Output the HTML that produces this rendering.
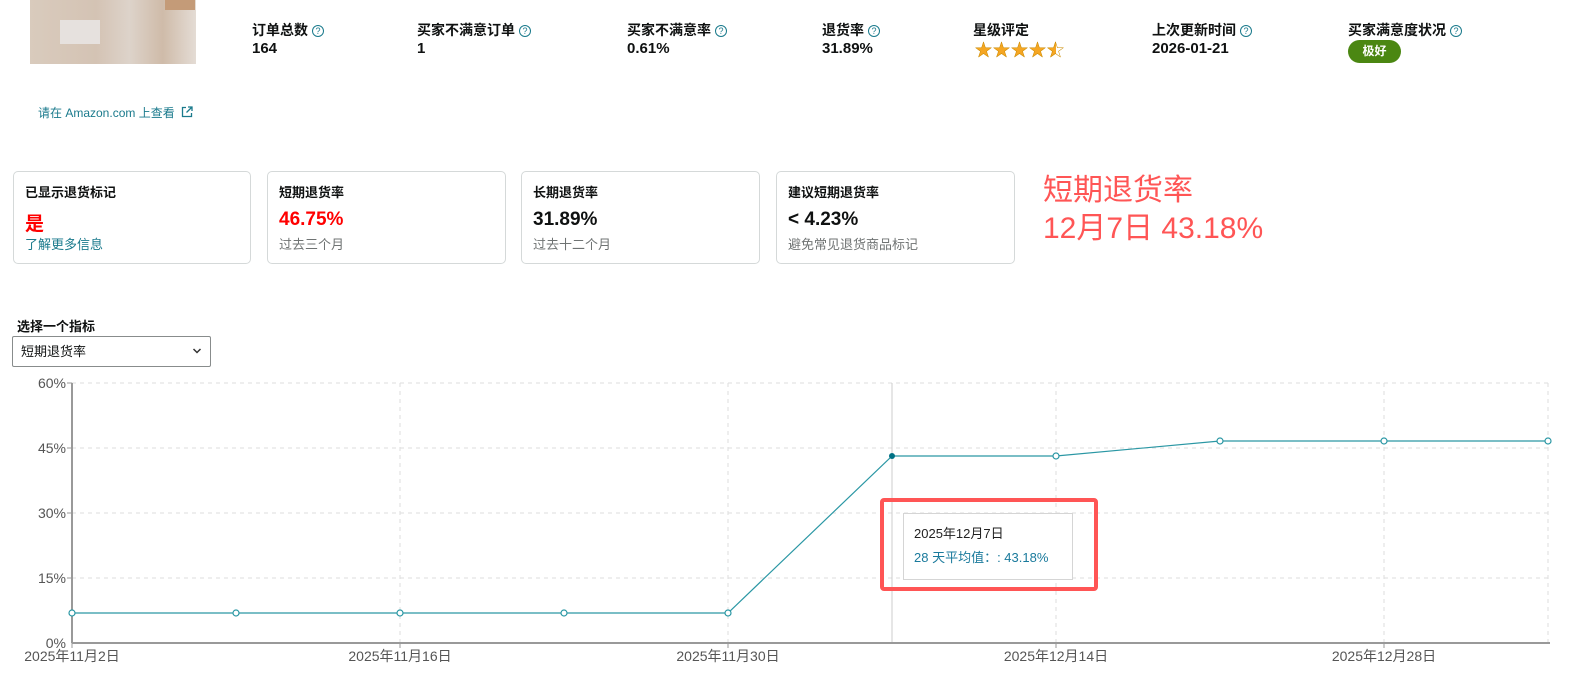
<!DOCTYPE html>
<html><head><meta charset="utf-8"><style>
*{margin:0;padding:0;box-sizing:border-box}
body{width:1578px;height:686px;background:#fff;font-family:"Liberation Sans","Noto Sans CJK SC",sans-serif;color:#0f1111;position:relative;overflow:hidden}
.a{position:absolute}
.lbl{font-size:14px;font-weight:bold;color:#0f1111;white-space:nowrap}
.val{font-size:15px;font-weight:bold;color:#0f1111}
.q{display:inline-block;width:12px;height:12px;border:1px solid #1a7a8c;border-radius:50%;font-size:9px;line-height:10px;text-align:center;color:#1a7a8c;font-weight:normal;vertical-align:1px;margin-left:4px}
.card{position:absolute;top:171px;height:93px;border:1px solid #d5d9d9;border-radius:5px}
.ct{position:absolute;left:11px;top:10px;font-size:13px;font-weight:bold}
.cv{position:absolute;left:11px;top:37px;font-size:19px;font-weight:bold}
.cs{position:absolute;left:11px;top:62px;font-size:13px;color:#6f7373}
</style></head><body>
<div class="a" style="left:30px;top:0;width:166px;height:64px;background:linear-gradient(90deg,#d9cbbd,#d4c3b4 40%,#ddd3ca 60%,#cfbba9 80%,#e4dcd5);"></div>
<div class="a" style="left:60px;top:20px;width:40px;height:24px;background:#e6e1de"></div>
<div class="a" style="left:165px;top:0;width:30px;height:10px;background:#c49b78"></div>

<div class="a lbl" style="left:252px;top:20px">订单总数<span class="q">?</span></div>
<div class="a val" style="left:252px;top:40px">164</div>
<div class="a lbl" style="left:417px;top:20px">买家不满意订单<span class="q">?</span></div>
<div class="a val" style="left:417px;top:40px">1</div>
<div class="a lbl" style="left:627px;top:20px">买家不满意率<span class="q">?</span></div>
<div class="a val" style="left:627px;top:40px">0.61%</div>
<div class="a lbl" style="left:822px;top:20px">退货率<span class="q">?</span></div>
<div class="a val" style="left:822px;top:40px">31.89%</div>
<div class="a lbl" style="left:973px;top:20px">星级评定</div>
<div class="a" style="left:975px;top:36px;font-size:17px;color:#f5a623;letter-spacing:1px;-webkit-text-stroke:0.5px #c98a00">★★★★<span style="background:linear-gradient(90deg,#f5a623 50%,#fff 50%);-webkit-background-clip:text;color:transparent">★</span></div>
<div class="a lbl" style="left:1152px;top:20px">上次更新时间<span class="q">?</span></div>
<div class="a val" style="left:1152px;top:40px">2026-01-21</div>
<div class="a lbl" style="left:1348px;top:20px">买家满意度状况<span class="q">?</span></div>
<div class="a" style="left:1348px;top:40px;width:53px;height:23px;background:#4b8712;border-radius:12px;color:#fff;font-size:12px;font-weight:bold;text-align:center;line-height:23px">极好</div>

<div class="a" style="left:38px;top:104px;font-size:12px;color:#1a7a8c">请在 Amazon.com 上查看 <svg width="12" height="12" viewBox="0 0 12 12" style="vertical-align:-1px;margin-left:3px"><path d="M5 1.5H1.5v9h9V7M7 1h4v4M11 1L5.5 6.5" fill="none" stroke="#1a7a8c" stroke-width="1.3"/></svg></div>

<div class="card" style="left:13px;width:238px"><div class="ct">已显示退货标记</div><div class="cv" style="color:#f00">是</div><div class="cs" style="color:#1a7a8c">了解更多信息</div></div>
<div class="card" style="left:267px;width:239px"><div class="ct">短期退货率</div><div class="cv" style="color:#f00">46.75%</div><div class="cs">过去三个月</div></div>
<div class="card" style="left:521px;width:239px"><div class="ct">长期退货率</div><div class="cv">31.89%</div><div class="cs">过去十二个月</div></div>
<div class="card" style="left:776px;width:239px"><div class="ct">建议短期退货率</div><div class="cv">&lt; 4.23%</div><div class="cs">避免常见退货商品标记</div></div>
<div class="a" style="left:1043px;top:172px;font-size:30px;color:#f55;line-height:38px">短期退货率<br>12月7日 43.18%</div>

<div class="a" style="left:17px;top:316px;font-size:13px;font-weight:bold">选择一个指标</div>
<div class="a" style="left:12px;top:336px;width:199px;height:31px;border:1px solid #888c8c;border-radius:2px;font-size:13px;line-height:29px;padding-left:8px">短期退货率<svg class="a" style="right:8px;top:10px" width="10" height="8" viewBox="0 0 10 8"><path d="M1.5 2l3.5 3.5L8.5 2" fill="none" stroke="#333" stroke-width="1.5"/></svg></div>

<svg class="a" style="left:0;top:370px" width="1578" height="316" viewBox="0 370 1578 316" font-family="Liberation Sans, Noto Sans CJK SC, sans-serif">
<g stroke="#ddd" stroke-dasharray="4,4" stroke-width="1">
<line x1="72" y1="383" x2="1548" y2="383"/><line x1="72" y1="448" x2="1548" y2="448"/><line x1="72" y1="513" x2="1548" y2="513"/><line x1="72" y1="578" x2="1548" y2="578"/>
<line x1="400" y1="383" x2="400" y2="643"/><line x1="728" y1="383" x2="728" y2="643"/><line x1="1056" y1="383" x2="1056" y2="643"/><line x1="1384" y1="383" x2="1384" y2="643"/><line x1="1548" y1="383" x2="1548" y2="643"/>
</g>
<line x1="892" y1="383" x2="892" y2="643" stroke="#ccc"/>
<line x1="72" y1="383" x2="72" y2="643" stroke="#999" stroke-width="2"/>
<line x1="72" y1="643" x2="1550" y2="643" stroke="#999" stroke-width="2"/>
<g stroke="#999"><line x1="67" y1="383" x2="72" y2="383"/><line x1="67" y1="448" x2="72" y2="448"/><line x1="67" y1="513" x2="72" y2="513"/><line x1="67" y1="578" x2="72" y2="578"/><line x1="72" y1="643" x2="72" y2="648"/><line x1="400" y1="643" x2="400" y2="648"/><line x1="728" y1="643" x2="728" y2="648"/><line x1="1056" y1="643" x2="1056" y2="648"/><line x1="1384" y1="643" x2="1384" y2="648"/></g>
<g font-size="14" fill="#555" text-anchor="end"><text x="66" y="388">60%</text><text x="66" y="453">45%</text><text x="66" y="518">30%</text><text x="66" y="583">15%</text><text x="66" y="648">0%</text></g>
<g font-size="14" fill="#555" text-anchor="middle"><text x="72" y="661">2025年11月2日</text><text x="400" y="661">2025年11月16日</text><text x="728" y="661">2025年11月30日</text><text x="1056" y="661">2025年12月14日</text><text x="1384" y="661">2025年12月28日</text></g>
<polyline fill="none" stroke="#2a97a4" stroke-width="1.2" points="72,613 236,613 400,613 564,613 728,613 892,456 1056,456 1220,441 1384,441 1548,441"/>
<g fill="#fff" stroke="#2a97a4" stroke-width="1.2"><circle cx="72" cy="613" r="3"/><circle cx="236" cy="613" r="3"/><circle cx="400" cy="613" r="3"/><circle cx="564" cy="613" r="3"/><circle cx="728" cy="613" r="3"/><circle cx="1056" cy="456" r="3"/><circle cx="1220" cy="441" r="3"/><circle cx="1384" cy="441" r="3"/><circle cx="1548" cy="441" r="3"/></g>
<circle cx="892" cy="456" r="3" fill="#007185"/>
<rect x="903.5" y="513.5" width="169" height="66" fill="#fff" stroke="#d5d5d5"/>
<text x="914" y="538" font-size="13" fill="#222">2025年12月7日</text>
<text x="914" y="562" font-size="13" fill="#1a7a9c">28 天平均值：: 43.18%</text>
<rect x="882" y="500" width="214" height="89" fill="none" stroke="#f55" stroke-width="4" rx="2"/>
</svg>
</body></html>
